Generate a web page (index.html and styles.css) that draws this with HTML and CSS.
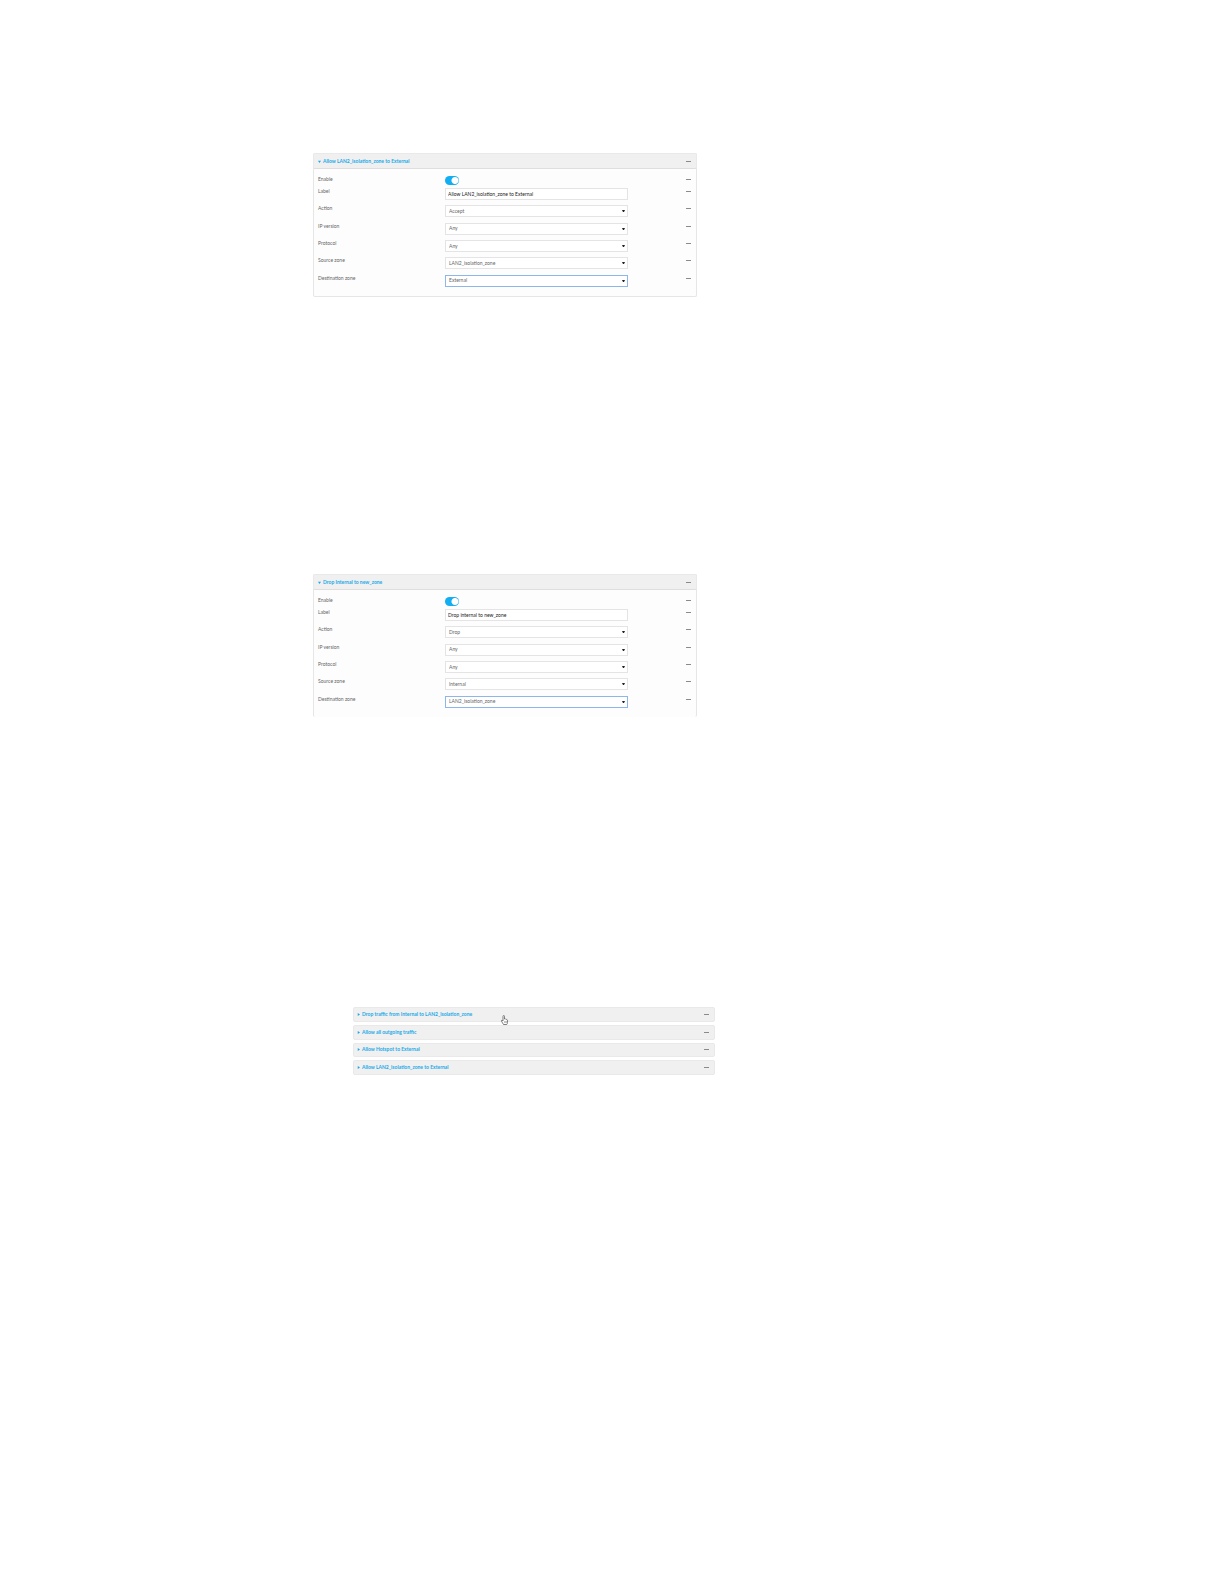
FILE: index.html
```
<!DOCTYPE html>
<html lang="en">
<head>
<meta charset="utf-8">
<title>Packet filtering</title>
<link rel="stylesheet" href="styles.css">
</head>
<body>
<main class="page">
  <form class="panel">
    <header class="bar">
      <button type="button" class="title"><svg class="caret" viewBox="0 0 4 4"><path d="M0 1h4L2 4z"/></svg>Allow LAN2_isolation_zone to External</button>
      <button type="button" class="more" aria-label="More"><i></i><i></i><i></i></button>
    </header>
    <div class="row enable"><label for="a-enable">Enable</label><input class="toggle" id="a-enable" type="checkbox" checked><button type="button" class="more" aria-label="More"><i></i><i></i><i></i></button></div>
    <div class="fields">
      <div class="row"><label for="a-label">Label</label><input class="control" id="a-label" type="text" value="Allow LAN2_isolation_zone to External"><button type="button" class="more" aria-label="More"><i></i><i></i><i></i></button></div>
      <div class="row"><label for="a-action">Action</label><select class="control" id="a-action"><option>Accept</option></select><button type="button" class="more" aria-label="More"><i></i><i></i><i></i></button></div>
      <div class="row"><label for="a-ip">IP version</label><select class="control" id="a-ip"><option>Any</option></select><button type="button" class="more" aria-label="More"><i></i><i></i><i></i></button></div>
      <div class="row"><label for="a-protocol">Protocol</label><select class="control" id="a-protocol"><option>Any</option></select><button type="button" class="more" aria-label="More"><i></i><i></i><i></i></button></div>
      <div class="row"><label for="a-source">Source zone</label><select class="control" id="a-source"><option>LAN2_isolation_zone</option></select><button type="button" class="more" aria-label="More"><i></i><i></i><i></i></button></div>
      <div class="row"><label for="a-dest">Destination zone</label><select class="control active" id="a-dest"><option>External</option></select><button type="button" class="more" aria-label="More"><i></i><i></i><i></i></button></div>
    </div>
  </form>

  <form class="panel open">
    <header class="bar">
      <button type="button" class="title"><svg class="caret" viewBox="0 0 4 4"><path d="M0 1h4L2 4z"/></svg>Drop Internal to new_zone</button>
      <button type="button" class="more" aria-label="More"><i></i><i></i><i></i></button>
    </header>
    <div class="row enable"><label for="b-enable">Enable</label><input class="toggle" id="b-enable" type="checkbox" checked><button type="button" class="more" aria-label="More"><i></i><i></i><i></i></button></div>
    <div class="fields">
      <div class="row"><label for="b-label">Label</label><input class="control" id="b-label" type="text" value="Drop internal to new_zone"><button type="button" class="more" aria-label="More"><i></i><i></i><i></i></button></div>
      <div class="row"><label for="b-action">Action</label><select class="control" id="b-action"><option>Drop</option></select><button type="button" class="more" aria-label="More"><i></i><i></i><i></i></button></div>
      <div class="row"><label for="b-ip">IP version</label><select class="control" id="b-ip"><option>Any</option></select><button type="button" class="more" aria-label="More"><i></i><i></i><i></i></button></div>
      <div class="row"><label for="b-protocol">Protocol</label><select class="control" id="b-protocol"><option>Any</option></select><button type="button" class="more" aria-label="More"><i></i><i></i><i></i></button></div>
      <div class="row"><label for="b-source">Source zone</label><select class="control" id="b-source"><option>Internal</option></select><button type="button" class="more" aria-label="More"><i></i><i></i><i></i></button></div>
      <div class="row"><label for="b-dest">Destination zone</label><select class="control active" id="b-dest"><option>LAN2_isolation_zone</option></select><button type="button" class="more" aria-label="More"><i></i><i></i><i></i></button></div>
    </div>
  </form>

  <section class="rules">
    <div class="bar">
      <button type="button" class="title"><svg class="caret" viewBox="0 0 4 4"><path d="M1 0v4l3-2z"/></svg>Drop traffic from Internal to LAN2_isolation_zone</button>
      <button type="button" class="more" aria-label="More"><i></i><i></i><i></i></button>
      <svg class="pointer" viewBox="0 0 14 20"><path d="M4 12V3q0-2 1.500-2T7 3v5q2-1 2.500 0.500 1.500-0.500 2 1 1.500 0 1.500 1.500v4q0 2-1.500 4H5L1 12.500q-0.500-2 1-2z" fill="#fff" stroke="#555" stroke-width="1.500"/><path d="M7 12v4M9 12v4M11 12v4" stroke="#888" fill="none"/></svg>
    </div>
    <div class="bar">
      <button type="button" class="title"><svg class="caret" viewBox="0 0 4 4"><path d="M1 0v4l3-2z"/></svg>Allow all outgoing traffic</button>
      <button type="button" class="more" aria-label="More"><i></i><i></i><i></i></button>
    </div>
    <div class="bar">
      <button type="button" class="title"><svg class="caret" viewBox="0 0 4 4"><path d="M1 0v4l3-2z"/></svg>Allow Hotspot to External</button>
      <button type="button" class="more" aria-label="More"><i></i><i></i><i></i></button>
    </div>
    <div class="bar">
      <button type="button" class="title"><svg class="caret" viewBox="0 0 4 4"><path d="M1 0v4l3-2z"/></svg>Allow LAN2_isolation_zone to External</button>
      <button type="button" class="more" aria-label="More"><i></i><i></i><i></i></button>
    </div>
  </section>
</main>
</body>
</html>
```
FILE: styles.css
```
* { box-sizing: border-box; }
body { margin: 0; background: #fff; font: 5px/7px Lato, "Open Sans", sans-serif; color: #666; }
button, input, select { font: inherit; margin: 0; padding: 0; border: 0; background: none; }
.page { padding: 153px 24px 120px 313px; }
.panel { max-width: 384px; padding-bottom: 4px; border: 1px solid #e6e6e6; border-top: 0; border-radius: 2px; background: #fdfdfd; margin-bottom: 277px; }
.panel.open { border-bottom: 0; margin-bottom: 290px; }
.bar { position: relative; display: flex; align-items: center; justify-content: space-between; padding: 0 5px 0 4px; border: 1px solid #e9e9e9; border-radius: 2px; background: #f0f0f0; }
.panel .bar { height: 16px; margin: 0 -1px 7px; border-bottom-color: #dedede; }
.title { display: flex; align-items: center; gap: 2px; color: #1ba9e8; font-weight: 700; white-space: nowrap; }
.caret { width: 3px; height: 3px; fill: currentColor; }
.more { display: flex; padding: 3px 0; width: 5px; }
.more i { flex: 1; height: 1px; background: #8a8a8a; }
.row { display: grid; grid-template-columns: 127px 183px 1fr; align-items: start; padding: 0 5px 0 4px; }
.row .more { justify-self: end; }
.enable { height: 12px; }
.fields { display: grid; grid-auto-rows: 1fr; height: 104px; }
.control { width: 183px; height: 12px; padding: 0 2px; border: 1px solid #e4e4e4; background: #fff; color: #222; }
select.control { appearance: none; padding: 0 3px; color: #666; background: #fff url("data:image/svg+xml,%3Csvg xmlns='http://www.w3.org/2000/svg' viewBox='0 0 3 2'%3E%3Cpath d='M0 0h3L2 2H1z' fill='%23222'/%3E%3C/svg%3E") no-repeat right 2px center / 3px 2px; }
select.control.active { border-color: #8fb6ea; }
.toggle { appearance: none; width: 14px; height: 9px; border-radius: 5px; background: radial-gradient(circle at 10px 50%, #fff 3px, #12aef2 4px); }
.rules { display: grid; grid-auto-rows: 1fr; gap: 3px; height: 68px; max-width: 362px; margin-left: 40px; }
.rules .bar { padding-left: 3px; }
.pointer { position: absolute; left: 147px; top: 7px; width: 7px; height: 10px; }
```
